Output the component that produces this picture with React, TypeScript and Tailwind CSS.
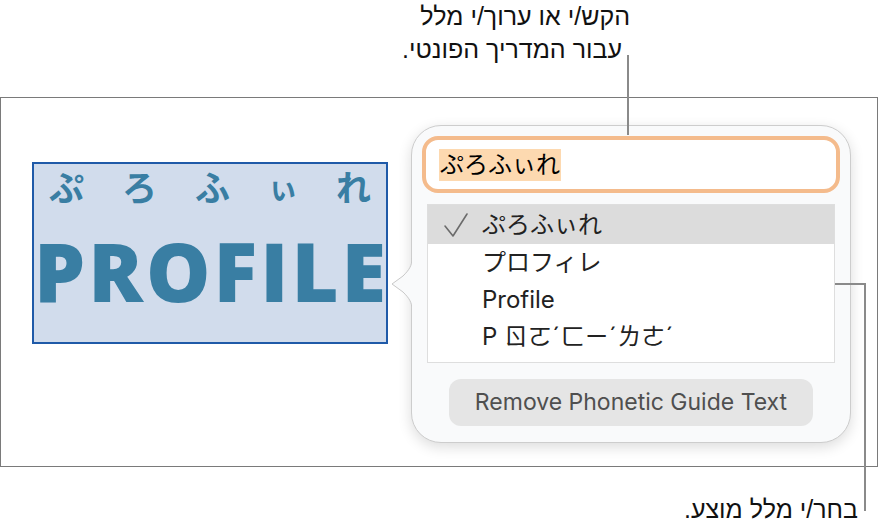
const HEB = { fontFamily: '"Liberation Sans", Arial, sans-serif' };
const UI = { fontFamily: 'Inter, "Noto Sans CJK JP", sans-serif' };
const JP = { fontFamily: 'Inter, "Noto Sans CJK JP", "Noto Sans CJK TC", sans-serif' };

const SUGGESTIONS = ["ぷろふぃれ", "プロフィレ", "Profile", "P ㄖㄛˊㄈㄧˊㄌㄜˊ"];

function Check() {
  return (
    <svg width="26" height="26" viewBox="0 0 26 26" className="shrink-0">
      <path d="M2 14 L10 24 L24 2" fill="none" stroke="#6b6b6b" strokeWidth="1.6" strokeLinecap="round" strokeLinejoin="round" />
    </svg>
  );
}

function Popover() {
  return (
    <div className="absolute left-[410px] top-[27px] w-[440px] h-[318px] rounded-[30px] bg-[#f9fafb] border border-[#cdcdcd] shadow-[0_4px_14px_rgba(0,0,0,0.14)] px-[10px] pt-[10px]">
      {/* pointer toward the selected text */}
      <svg width="24" height="52" viewBox="0 0 24 52" className="absolute left-[-23px] top-[132px]">
        <path d="M23 0 C23 8 20 12 14 18 L3 26 L14 34 C20 40 23 44 23 52 Z" fill="#f9fafb" />
        <path d="M23 0 C23 8 20 12 14 18 L3 26 L14 34 C20 40 23 44 23 52" fill="none" stroke="#c9c9c9" strokeWidth="1" />
        <rect x="23" y="0" width="2" height="52" fill="#f9fafb" />
      </svg>

      <div className="h-[57px] rounded-[16px] border-[4px] border-[#f4bb8c] bg-white flex items-center pl-[13px]">
        <span className="bg-[#fdd9b0] text-[24px] leading-[32px] text-black px-[1px]" style={JP}>ぷろふぃれ</span>
      </div>

      <div className="mt-[11px] mx-[5px] h-[159px] bg-white border border-[#dedede]">
        {SUGGESTIONS.map((s, i) => (
          <div
            key={s}
            className={`flex items-center ${i === 0 ? "bg-[#dcdcdc] h-[39px]" : "h-[37px]"}`}
          >
            <div className="w-[54px] pl-[15px]">{i === 0 && <Check />}</div>
            <span className="text-[24px] leading-[30px] text-[#222]" style={JP}>{s}</span>
          </div>
        ))}
      </div>

      <div className="mt-[16px] mx-[27px] h-[47px] rounded-[12px] bg-[#e5e5e5] flex items-center justify-center">
        <span className="text-[23px] text-[#4f4f4f]" style={UI}>Remove Phonetic Guide Text</span>
      </div>
    </div>
  );
}

export default function App() {
  return (
    <div className="relative w-[878px] h-[532px] bg-white overflow-hidden">
      {/* top annotation */}
      <div dir="rtl" className="h-[97px] pr-[248px] text-[25px] leading-[33px] text-[#111]" style={HEB}>
        <div>הקש/י או ערוך/י מלל</div>
        <div className="mr-[8px]">עבור המדריך הפונטי.</div>
      </div>

      {/* document frame */}
      <div className="relative h-[370px] border border-[#7a7a7a]">
        <div className="ml-[31px] mt-[64px] w-[356px] h-[182px] bg-[#d1dcec] border-2 border-[#1f5aa8] text-[#397ea3] flex flex-col">
          <div className="flex justify-between items-end px-[15px] pt-[4px] text-[35px] leading-[40px] font-bold" style={JP}>
            <span>ぷ</span><span>ろ</span><span>ふ</span><span className="text-[30px]">ぃ</span><span>れ</span>
          </div>
          <div className="text-center text-[81px] leading-[100px] font-extrabold tracking-[3px] mt-[13px]" style={{ fontFamily: '"Open Sans", sans-serif' }}>
            PROFILE
          </div>
        </div>
        <Popover />
      </div>

      {/* bottom annotation */}
      <div dir="rtl" className="pr-[20px] pt-[26px] text-[25px] leading-[33px] text-[#111]" style={HEB}>
        בחר/י מלל מוצע.
      </div>

      {/* callout lines */}
      <div className="absolute left-[627px] top-[55px] w-[2px] h-[80px] bg-[#8a8a8a]" />
      <div className="absolute left-[835px] top-[283px] w-[31px] h-[2px] bg-[#8a8a8a]" />
      <div className="absolute left-[864px] top-[283px] w-[2px] h-[228px] bg-[#8a8a8a]" />
    </div>
  );
}
